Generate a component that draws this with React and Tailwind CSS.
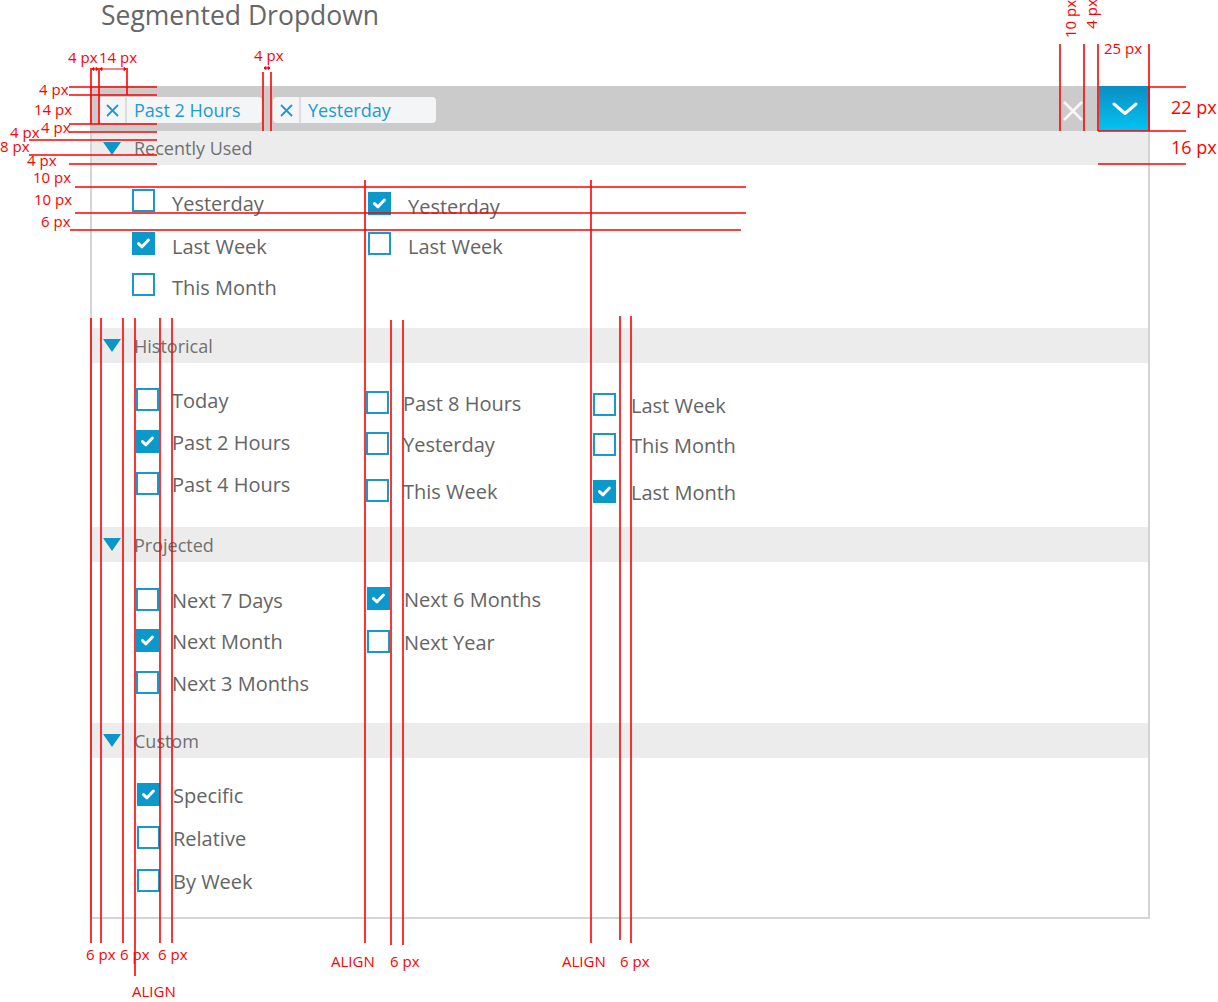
import React from 'react';

const sections = [
    {
        title: 'Recently Used',
        head: 'h-[34px]',
        body: 'h-[163px] pl-[40px]',
        txt: 'top-[3px]',
        cols: [
            { w: 'w-[236px]', gap: 'gap-[17px]', items: [['Yesterday', false, 'mt-[24px]'], ['Last Week', true, 'mt-[20px]'], ['This Month', false, 'mt-[18px]']] },
            { w: 'w-[230px]', gap: 'gap-[17px]', items: [['Yesterday', true, 'mt-[27px]'], ['Last Week', false, 'mt-[17px]']] },
        ],
    },
    {
        title: 'Historical',
        head: 'h-[35px]',
        body: 'h-[164px] pl-[44px]',
        txt: 'top-[1px]',
        cols: [
            { w: 'w-[230px]', gap: 'gap-[13px]', items: [['Today', false, 'mt-[25px]'], ['Past 2 Hours', true, 'mt-[19px]'], ['Past 4 Hours', false, 'mt-[19px]']] },
            { w: 'w-[227px]', gap: 'gap-[14px]', items: [['Past 8 Hours', false, 'mt-[28px]'], ['Yesterday', false, 'mt-[18px]'], ['This Week', false, 'mt-[24px]']] },
            { w: 'w-[230px]', gap: 'gap-[15px]', items: [['Last Week', false, 'mt-[30px]'], ['This Month', false, 'mt-[17px]'], ['Last Month', true, 'mt-[24px]']] },
        ],
    },
    {
        title: 'Projected',
        head: 'h-[35px]',
        body: 'h-[161px] pl-[44px]',
        txt: 'top-[1px]',
        cols: [
            { w: 'w-[231px]', gap: 'gap-[13px]', items: [['Next 7 Days', false, 'mt-[26px]'], ['Next Month', true, 'mt-[18px]'], ['Next 3 Months', false, 'mt-[19px]']] },
            { w: 'w-[230px]', gap: 'gap-[14px]', items: [['Next 6 Months', true, 'mt-[25px]'], ['Next Year', false, 'mt-[20px]']] },
        ],
    },
    {
        title: 'Custom',
        head: 'h-[35px]',
        body: 'h-[159px] pl-[45px]',
        txt: 'top-[1px]',
        cols: [
            { w: 'w-[230px]', gap: 'gap-[13px]', items: [['Specific', true, 'mt-[25px]'], ['Relative', false, 'mt-[20px]'], ['By Week', false, 'mt-[20px]']] },
        ],
    },
];

// red spec lines: x1, y1, x2, y2
const lines = [
    [91, 68, 91, 124], [99, 68, 99, 124], [127, 68, 127, 95],
    [69, 87, 157, 87], [69, 95, 157, 95], [69, 124, 157, 124], [69, 132, 157, 132],
    [29, 140, 157, 140], [29, 155, 157, 155], [69, 164, 157, 164],
    [263, 72, 263, 131], [271, 72, 271, 131],
    [1060, 44, 1060, 131], [1084, 44, 1084, 131], [1098, 44, 1098, 131], [1149, 44, 1149, 131],
    [1150, 87, 1186, 87], [1098, 131, 1186, 131], [1098, 164, 1186, 164],
    [75, 187, 746, 187], [75, 213, 746, 213], [70, 230, 741, 230],
    [91, 318, 91, 943], [101, 318, 101, 943], [123, 318, 123, 943], [135, 318, 135, 976],
    [160, 318, 160, 943], [172, 318, 172, 943],
    [365, 180, 365, 943], [391, 320, 391, 945], [403, 320, 403, 945],
    [591, 180, 591, 943], [620, 316, 620, 940], [631, 316, 631, 943],
];

const labels = [
    ['4 px', 'left-[68px] top-[51px]'],
    ['14 px', 'left-[99px] top-[51px]'],
    ['4 px', 'left-[254px] top-[49px]'],
    ['25 px', 'left-[1104px] top-[42px]'],
    ['4 px', 'left-[39px] top-[83px]'],
    ['14 px', 'left-[34px] top-[103px]'],
    ['4 px', 'left-[41px] top-[121px]'],
    ['4 px', 'left-[10px] top-[126px]'],
    ['8 px', 'left-[0px] top-[140px]'],
    ['4 px', 'left-[27px] top-[154px]'],
    ['10 px', 'left-[33px] top-[171px]'],
    ['10 px', 'left-[34px] top-[193px]'],
    ['6 px', 'left-[41px] top-[215px]'],
    ['6 px', 'left-[86px] top-[948px]'],
    ['6 px', 'left-[120px] top-[948px]'],
    ['6 px', 'left-[158px] top-[948px]'],
    ['ALIGN', 'left-[132px] top-[985px]'],
    ['ALIGN', 'left-[331px] top-[955px]'],
    ['6 px', 'left-[390px] top-[955px]'],
    ['ALIGN', 'left-[562px] top-[955px]'],
    ['6 px', 'left-[620px] top-[955px]'],
];

const Checkbox = ({ checked }) => (
    <span
        className={`flex h-[23px] w-[23px] shrink-0 items-center justify-center border-2 ${
            checked ? 'border-[#0b98cb] bg-[#0b98cb]' : 'border-[#1a98cc] bg-white'
        }`}
    >
        {checked && (
            <svg width="17" height="17" viewBox="0 0 17 17">
                <path d="M3.5 8.6 L7 11.8 L13.4 5" fill="none" stroke="white" strokeWidth="3" strokeLinecap="round" strokeLinejoin="round" />
            </svg>
        )}
    </span>
);

const Chip = ({ label }) => (
    <div className="flex h-[26px] w-[163px] overflow-hidden rounded-[4px] bg-[#f4f5f7]">
        <div className="flex w-[28px] items-center justify-center border-r-2 border-[#dcdde0]">
            <svg width="13" height="13" viewBox="0 0 13 13">
                <path d="M1 1 L12 12 M12 1 L1 12" stroke="#1a9ad6" strokeWidth="1.8" />
            </svg>
        </div>
        <span className="pl-[7px] text-[18px] leading-[26px] text-[#1a9ad6]">{label}</span>
    </div>
);

const Section = ({ s }) => (
    <div>
        <div className={`flex items-center bg-[#ececec] pl-[11px] ${s.head}`}>
            <svg width="18" height="13" viewBox="0 0 18 13">
                <path d="M0 0 H18 L9 13 Z" fill="#0a96c8" />
            </svg>
            <span className="ml-[13px] text-[18px] leading-none text-[#707070]">{s.title}</span>
        </div>
        <div className={`flex ${s.body}`}>
            {s.cols.map((c, i) => (
                <div key={i} className={`flex flex-col ${c.w}`}>
                    {c.items.map(([label, checked, mt]) => (
                        <div key={label} className={`flex h-[23px] items-center ${c.gap} ${mt}`}>
                            <Checkbox checked={checked} />
                            <span className={`relative whitespace-nowrap text-[20px] leading-none text-[#646464] ${s.txt}`}>{label}</span>
                        </div>
                    ))}
                </div>
            ))}
        </div>
    </div>
);

export default function App() {
    return (
        <div className="relative h-[1002px] w-[1218px] overflow-hidden bg-white font-['Open_Sans',sans-serif]">
            <h1 className="h-[30px] whitespace-nowrap pl-[101px] text-[26.5px] leading-[30px] text-[#666666]">Segmented Dropdown</h1>

            <div className="ml-[90px] mt-[56px] w-[1060px]">
                <div className="flex h-[45px]">
                    <div className="flex flex-1 items-start gap-[11px] bg-[#cbcbcb] pl-[9px] pt-[11px]">
                        <Chip label="Past 2 Hours" />
                        <Chip label="Yesterday" />
                        <div className="ml-auto mr-[16px] mt-[4px] flex h-[20px] w-[20px] items-center justify-center">
                            <svg width="20" height="20" viewBox="0 0 20 20">
                                <path d="M1 1 L19 19 M19 1 L1 19" stroke="#f7f7f7" strokeWidth="2.6" />
                            </svg>
                        </div>
                    </div>
                    <button className="flex w-[51px] items-center justify-center bg-gradient-to-b from-[#0a8ec3] to-[#02c4f3]">
                        <svg width="26" height="14" viewBox="0 0 26 14">
                            <path d="M2 2 L13 11.5 L24 2" fill="none" stroke="white" strokeWidth="3" strokeLinecap="round" strokeLinejoin="round" />
                        </svg>
                    </button>
                </div>
                <div className="border-x-2 border-b-2 border-[#d4d4d4]">
                    {sections.map((s) => (
                        <Section key={s.title} s={s} />
                    ))}
                </div>
            </div>

            {/* spec annotations */}
            <svg className="pointer-events-none absolute left-0 top-0" width="1218" height="1002">
                {lines.map(([x1, y1, x2, y2], i) => (
                    <line key={i} x1={x1} y1={y1} x2={x2} y2={y2} stroke="#ff0000" strokeWidth="1.6" />
                ))}
                <g stroke="#ff0000" strokeWidth="1" fill="#ff0000">
                    <line x1="92" y1="69" x2="98" y2="69" />
                    <line x1="100" y1="69" x2="126" y2="69" />
                    <line x1="264" y1="68" x2="270" y2="68" />
                    <path d="M92 69 l2 -1.5 v3 Z M98 69 l-2 -1.5 v3 Z M100 69 l2 -1.5 v3 Z M126 69 l-2 -1.5 v3 Z M264 68 l2 -1.5 v3 Z M270 68 l-2 -1.5 v3 Z" />
                </g>
            </svg>
            {labels.map(([t, pos], i) => (
                <span key={i} className={`absolute whitespace-nowrap text-[15px] leading-[12px] text-[#ff0000] ${pos}`}>
                    {t}
                </span>
            ))}
            <span className="absolute left-[1171px] top-[98px] text-[18px] leading-[18px] text-[#ff0000]">22 px</span>
            <span className="absolute left-[1171px] top-[138px] text-[18px] leading-[18px] text-[#ff0000]">16 px</span>
            <span className="absolute left-[1070px] top-[19px] -translate-x-1/2 -translate-y-1/2 -rotate-90 whitespace-nowrap text-[15px] leading-[14px] text-[#ff0000]">10 px</span>
            <span className="absolute left-[1091px] top-[14px] -translate-x-1/2 -translate-y-1/2 -rotate-90 whitespace-nowrap text-[15px] leading-[14px] text-[#ff0000]">4 px</span>
        </div>
    );
}
